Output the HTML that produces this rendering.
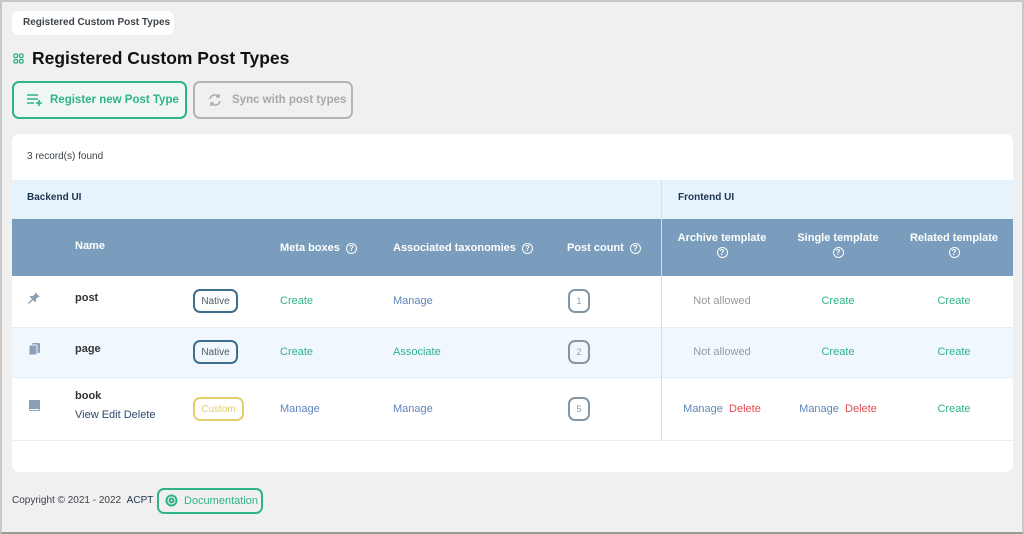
<!DOCTYPE html>
<html><head><meta charset="utf-8"><style>
*{box-sizing:border-box;margin:0;padding:0}
body{width:1024px;height:534px;background:#f0f0f1;font-family:"Liberation Sans",sans-serif;position:relative;overflow:hidden}
.frame{position:absolute;left:0;top:0;width:1024px;height:534px;border:2px solid #c8c8c8;border-bottom-color:#999;pointer-events:none}
.abs{position:absolute;white-space:nowrap}
.crumb{left:12px;top:11px;width:162px;height:24px;background:#fff;border-radius:7px;font-size:10px;font-weight:bold;color:#3c434a;line-height:24px;padding-left:11px}
h1{position:absolute;left:32px;top:48px;font-size:17.5px;font-weight:bold;color:#111;white-space:nowrap}
.btn{top:81px;height:38px;border-radius:7px;font-size:11.5px;font-weight:bold;line-height:34px}
.card{left:12px;top:134px;width:1001px;height:338px;background:#fff;border-radius:7px;overflow:hidden}
.t{font-size:11px}
.g{color:#2fb38b}.b{color:#5f86b8}.r{color:#e04b50}.gr{color:#9a9a9a}
.badge{position:absolute;width:45px;height:24px;border:2px solid #3d6f8c;border-radius:7px;font-size:10px;color:#4d5b66;display:flex;align-items:center;justify-content:center}
.cnt{position:absolute;width:22px;height:24px;border:2px solid #8296a6;border-radius:7px;font-size:9px;color:#8a99a6;display:flex;align-items:center;justify-content:center}
.q{display:inline-block;width:11px;height:11px;border:1.3px solid #fff;border-radius:50%;font-size:8px;line-height:9px;text-align:center;vertical-align:middle;margin-left:6px}
.hd{color:#fff;font-size:11px;font-weight:bold;position:absolute;white-space:nowrap}
.c{text-align:center;width:120px;position:absolute;white-space:nowrap}
</style></head><body>
<div class="abs crumb">Registered Custom Post Types</div>
<svg class="abs" style="left:13px;top:53px" width="11" height="11" viewBox="0 0 11 11" fill="none" stroke="#2fb38b" stroke-width="1.3"><rect x="1" y="1" width="3.5" height="3.5" rx="1"/><rect x="6.5" y="1" width="3.5" height="3.5" rx="1"/><rect x="1" y="6.5" width="3.5" height="3.5" rx="1"/><rect x="6.5" y="6.5" width="3.5" height="3.5" rx="1"/></svg>
<h1>Registered Custom Post Types</h1>
<div class="abs btn" style="left:12px;width:175px;border:2px solid #2fb38b;background:#f0f7f3;color:#2fb38b;padding-left:36px">Register new Post Type</div>
<svg class="abs" style="left:27px;top:94px" width="16" height="12" viewBox="0 0 16 12" stroke="#2fb38b" stroke-width="1.6"><path d="M0 1h11M0 5h11M0 9h7M12 6v6M9 9h6"/></svg>
<div class="abs btn" style="left:193px;width:160px;border:2px solid #b5b5b5;color:#a8a8a8;padding-left:37px">Sync with post types</div>
<svg class="abs" style="left:208px;top:93px" width="14" height="14" viewBox="0 0 14 14" fill="none" stroke="#aaa" stroke-width="1.5"><path d="M2 6a5 5 0 0 1 9-2M12 8a5 5 0 0 1-9 2"/><path d="M11 1v3H8M3 13v-3h3"/></svg>
<div class="abs card">
 <div class="abs t" style="left:15px;top:17px;font-size:10px;color:#3c434a">3 record(s) found</div>
 <div class="abs" style="left:0;top:46px;width:1001px;height:39px;background:#e6f3fd"></div>
 <div class="abs" style="left:15px;top:58px;font-size:10px;font-weight:bold;color:#1d3450">Backend UI</div>
 <div class="abs" style="left:666px;top:58px;font-size:10px;font-weight:bold;color:#1d3450">Frontend UI</div>
 <div class="abs" style="left:0;top:85px;width:1001px;height:57px;background:#7a9dbd"></div>
 <div class="hd" style="left:63px;top:106px">Name</div>
 <div class="hd" style="left:268px;top:108px">Meta boxes<span class="q">?</span></div>
 <div class="hd" style="left:381px;top:108px">Associated taxonomies<span class="q">?</span></div>
 <div class="hd" style="left:555px;top:108px">Post count<span class="q">?</span></div>
 <div class="hd c" style="left:650px;top:98px">Archive template<br><span class="q" style="margin:3px 0 0">?</span></div>
 <div class="hd c" style="left:766px;top:98px">Single template<br><span class="q" style="margin:3px 0 0">?</span></div>
 <div class="hd c" style="left:882px;top:98px">Related template<br><span class="q" style="margin:3px 0 0">?</span></div>
 <div class="abs" style="left:0;top:193px;width:1001px;height:51px;background:#f0f7fd;border-top:1px solid #e6eef5;border-bottom:1px solid #e6eef5"></div>
 <div class="abs" style="left:0;top:306px;width:1001px;height:1px;background:#e8eef3"></div>
 <div class="abs" style="left:649px;top:46px;width:1px;height:260px;background:#d5dde5"></div>
 <svg class="abs" style="left:16px;top:158px" width="12" height="12" viewBox="0 0 12 12" fill="#8aa0b4"><path d="M7 0l5 5-2 0-2 2 0 3-1 0-2-2-4 4-1-1 4-4-2-2 0-1 3 0 2-2z"/></svg>
 <div class="abs t" style="left:63px;top:158px;font-weight:bold;color:#333">post</div>
 <div class="badge" style="left:181px;top:155px">Native</div>
 <div class="abs t g" style="left:268px;top:161px">Create</div>
 <div class="abs t b" style="left:381px;top:161px">Manage</div>
 <div class="cnt" style="left:556px;top:155px">1</div>
 <div class="t gr c" style="left:650px;top:161px">Not allowed</div>
 <div class="t g c" style="left:766px;top:161px">Create</div>
 <div class="t g c" style="left:882px;top:161px">Create</div>
 <svg class="abs" style="left:17px;top:209px" width="11" height="12" viewBox="0 0 11 12" fill="#8aa0b4"><rect x="3" y="0" width="8" height="10" rx="1"/><rect x="0" y="2" width="8" height="10" rx="1" stroke="#f0f7fd"/></svg>
 <div class="abs t" style="left:63px;top:209px;font-weight:bold;color:#333">page</div>
 <div class="badge" style="left:181px;top:206px">Native</div>
 <div class="abs t g" style="left:268px;top:212px">Create</div>
 <div class="abs t g" style="left:381px;top:212px">Associate</div>
 <div class="cnt" style="left:556px;top:206px">2</div>
 <div class="t gr c" style="left:650px;top:212px">Not allowed</div>
 <div class="t g c" style="left:766px;top:212px">Create</div>
 <div class="t g c" style="left:882px;top:212px">Create</div>
 <svg class="abs" style="left:17px;top:266px" width="11" height="12" viewBox="0 0 11 12" fill="#8aa0b4"><rect x="0" y="0" width="11" height="11" rx="1"/><rect x="1" y="9" width="9" height="1" fill="#fff"/></svg>
 <div class="abs t" style="left:63px;top:256px;font-weight:bold;color:#333">book</div>
 <div class="abs t" style="left:63px;top:275px;color:#2c4a6a">View Edit Delete</div>
 <div class="badge" style="left:181px;top:263px;width:51px;border-color:#e3cf6e;color:#e3cf6e">Custom</div>
 <div class="abs t b" style="left:268px;top:269px">Manage</div>
 <div class="abs t b" style="left:381px;top:269px">Manage</div>
 <div class="cnt" style="left:556px;top:263px">5</div>
 <div class="t c" style="left:650px;top:269px"><span class="b">Manage</span>&nbsp; <span class="r">Delete</span></div>
 <div class="t c" style="left:766px;top:269px"><span class="b">Manage</span>&nbsp; <span class="r">Delete</span></div>
 <div class="t g c" style="left:882px;top:269px">Create</div>
</div>
<div class="abs" style="left:12px;top:495px;font-size:10px;color:#3c434a">Copyright © 2021 - 2022 &nbsp;<span style="color:#1d3450">ACPT</span></div>
<div class="abs" style="left:157px;top:488px;width:106px;height:26px;border:2px solid #2fb38b;border-radius:7px;font-size:11px;color:#2fb38b;line-height:22px;padding-left:25px">Documentation</div>
<svg class="abs" style="left:165px;top:494px" width="13" height="13" viewBox="0 0 13 13" fill="none" stroke="#2fb38b" stroke-width="2"><circle cx="6.5" cy="6.5" r="5"/><circle cx="6.5" cy="6.5" r="2"/></svg>
<div class="frame"></div>
</body></html>
